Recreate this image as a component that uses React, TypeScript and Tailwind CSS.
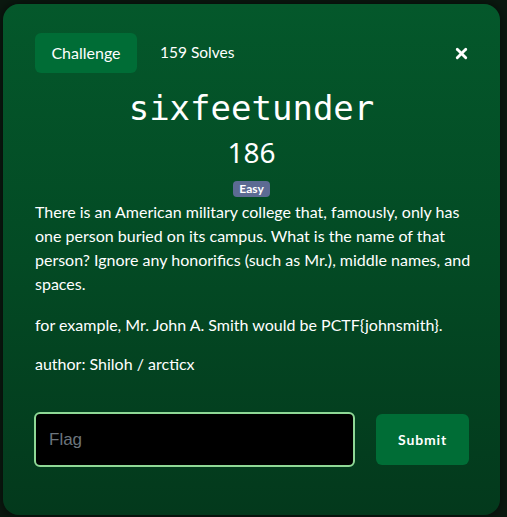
import { X } from "lucide-react";

const App = () => {
  return (
    <div className="min-h-screen w-full bg-[#0b1910] pt-[4px] px-[3px] font-['Lato','Noto_Sans',sans-serif]">
      <div className="relative w-[497px] h-[511px] rounded-[16px] bg-gradient-to-b from-[#04582b] via-[#034a24] to-[#03391c] shadow-[0_0_12px_rgba(0,0,0,0.6)] pl-[32px] pr-[24px] pt-[29px]">
        {/* Header */}
        <div className="flex items-center">
          <button className="h-[40px] w-[102px] rounded-[6px] bg-[#006d36] text-white text-[16px]">
            Challenge
          </button>
          <span className="ml-[23px] text-white text-[15.5px]">159 Solves</span>
          <button className="ml-auto mr-[6px] text-white">
            <X size={17} strokeWidth={4} />
          </button>
        </div>

        {/* Title */}
        <div className="mt-[15px] pr-[8px] flex flex-col items-center text-white">
          <h2 className="font-['DejaVu_Sans_Mono',monospace] text-[34px] leading-[41px]">
            sixfeetunder
          </h2>
          <h3 className="mt-[6px] font-['Noto_Sans',sans-serif] text-[28px] leading-[34px]">
            186
          </h3>
          <span className="mt-[12px] rounded-[4px] bg-[#5c6b93] px-[6px] text-[12px] font-bold leading-[16px] text-white">
            Easy
          </span>
        </div>

        {/* Description */}
        <div className="mt-[3px] text-white text-[16px] leading-[24px]">
          <p>
            There is an American military college that, famously, only has one person buried on its campus. What is the
            name of that person? Ignore any honorifics (such as Mr.), middle names, and spaces.
          </p>
          <p className="mt-[17px]">for example, Mr. John A. Smith would be PCTF{"{"}johnsmith{"}"}.</p>
          <p className="mt-[15px]">author: Shiloh / arcticx</p>
        </div>

        {/* Flag form */}
        <div className="mt-[36px] flex items-center">
          <input
            placeholder="Flag"
            className="-ml-[1px] h-[55px] w-[321px] rounded-[6px] border-2 border-[#8fd896] bg-black px-[13px] text-[17px] text-white placeholder:text-[#6c757d] font-['Liberation_Sans',sans-serif] outline-none"
          />
          <button className="ml-[21px] h-[51px] w-[93px] rounded-[6px] bg-[#006d36] text-white text-[14px] font-bold tracking-[0.06em]">
            Submit
          </button>
        </div>
      </div>
    </div>
  );
};

export default App;
